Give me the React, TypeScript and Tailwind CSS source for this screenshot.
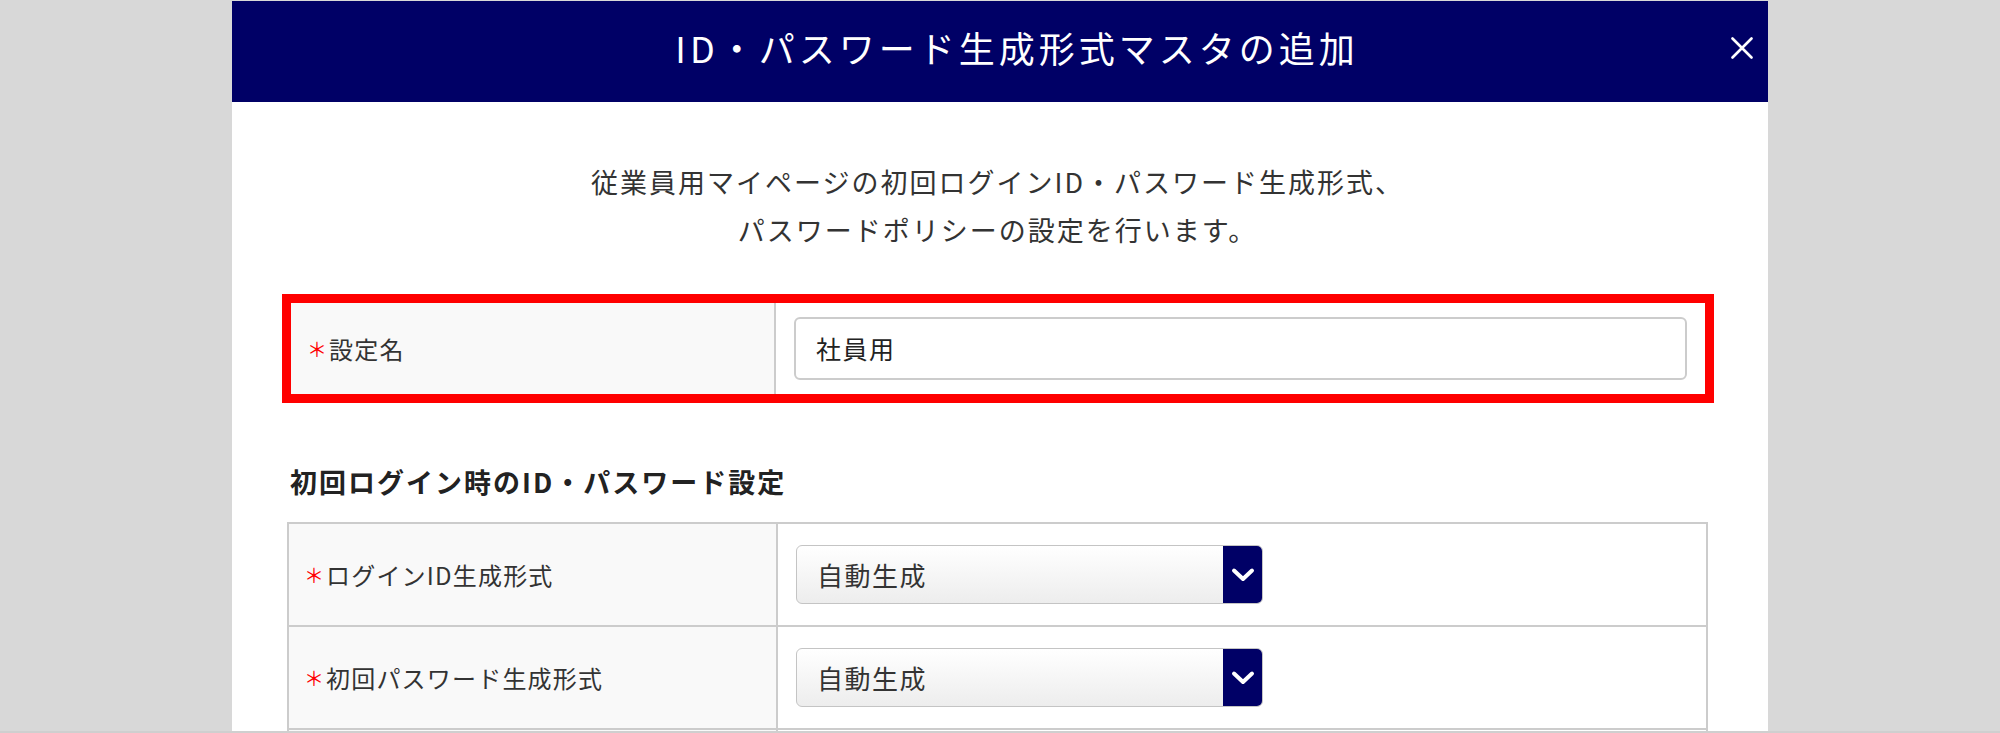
import React from "react";

function Chevron() {
  return (
    <svg width="24" height="16" viewBox="0 0 24 16" fill="none">
      <path d="M3 3.5 L12 12 L21 3.5" stroke="#ffffff" strokeWidth="4" strokeLinecap="round" strokeLinejoin="round" />
    </svg>
  );
}

function Select({ value }: { value: string }) {
  return (
    <div className="flex h-[59px] w-[467px] overflow-hidden rounded-[6px] border border-[#c4c4c4] bg-gradient-to-b from-white to-[#ededed]">
      <div className="flex flex-1 items-center pl-[20px] text-[26px] tracking-[1.5px] text-[#333]">{value}</div>
      <div className="flex w-[39px] items-center justify-center bg-[#000066]">
        <Chevron />
      </div>
    </div>
  );
}

function Label({ text }: { text: string }) {
  return (
    <div className="flex items-center pl-[15px] text-[24px] tracking-[1.2px] text-[#333]">
      <span className="mr-[2px] text-[20px] tracking-normal text-[#ff0000]">＊</span>
      <span>{text}</span>
    </div>
  );
}

function Row({ label, value }: { label?: string; value?: string }) {
  return (
    <div className="flex h-[103px] border-b-2 border-[#cccccc]">
      <div className="flex w-[489px] items-center border-r-2 border-[#cccccc] bg-[#f9f9f9]">
        {label ? <Label text={label} /> : null}
      </div>
      <div className="flex flex-1 items-center bg-white pl-[18px]">
        {value ? <Select value={value} /> : null}
      </div>
    </div>
  );
}

export default function App() {
  return (
    <div className="h-[733px] w-full overflow-hidden border-t border-b-2 border-t-[#d8d8d8] border-b-[#cfcfcf] bg-[#d8d8d8] font-['Noto_Sans_CJK_JP','Noto_Sans',sans-serif]">
      <div className="mx-auto w-[1536px] bg-white">
        <div className="relative flex h-[101px] items-center justify-center bg-[#000066] pb-[10px] pl-[34px]">
          <h1 className="text-[36px] font-normal leading-[48px] tracking-[4px] text-white">ID・パスワード生成形式マスタの追加</h1>
          <button className="absolute right-[15px] top-[36px] flex h-[22px] w-[22px] items-center justify-center" aria-label="close">
            <svg width="22" height="22" viewBox="0 0 22 22">
              <path d="M1.5 1.5 L20.5 20.5 M20.5 1.5 L1.5 20.5" stroke="#ffffff" strokeWidth="2.6" strokeLinecap="round" />
            </svg>
          </button>
        </div>

        <div className="pb-[40px] pl-[55px] pr-[60px] pt-[56px]">
          <p className="text-center text-[27px] leading-[48px] tracking-[2px] text-[#333]">
            従業員用マイページの初回ログインID・パスワード生成形式、
            <br />
            パスワードポリシーの設定を行います。
          </p>

          <div className="-ml-[5px] -mr-[6px] mt-[40px] flex h-[109px] border-[9px] border-[#ff0000]">
            <div className="flex w-[485px] items-center border-r-2 border-[#cccccc] bg-[#f9f9f9]">
              <div className="pl-[1px]">
                <Label text="設定名" />
              </div>
            </div>
            <div className="flex flex-1 items-center bg-white px-[18px]">
              <div className="flex h-[63px] w-full items-center rounded-[6px] border-2 border-[#cccccc] bg-white pl-[20px] text-[25px] tracking-[1.5px] text-[#222]">
                社員用
              </div>
            </div>
          </div>

          <h2 className="mt-[59px] pl-[3px] text-[27px] font-bold leading-[40px] tracking-[2px] text-[#222]">
            初回ログイン時のID・パスワード設定
          </h2>

          <div className="mt-[20px] border-x-2 border-t-2 border-[#cccccc]">
            <Row label="ログインID生成形式" value="自動生成" />
            <Row label="初回パスワード生成形式" value="自動生成" />
            <Row />
          </div>
        </div>
      </div>
    </div>
  );
}
